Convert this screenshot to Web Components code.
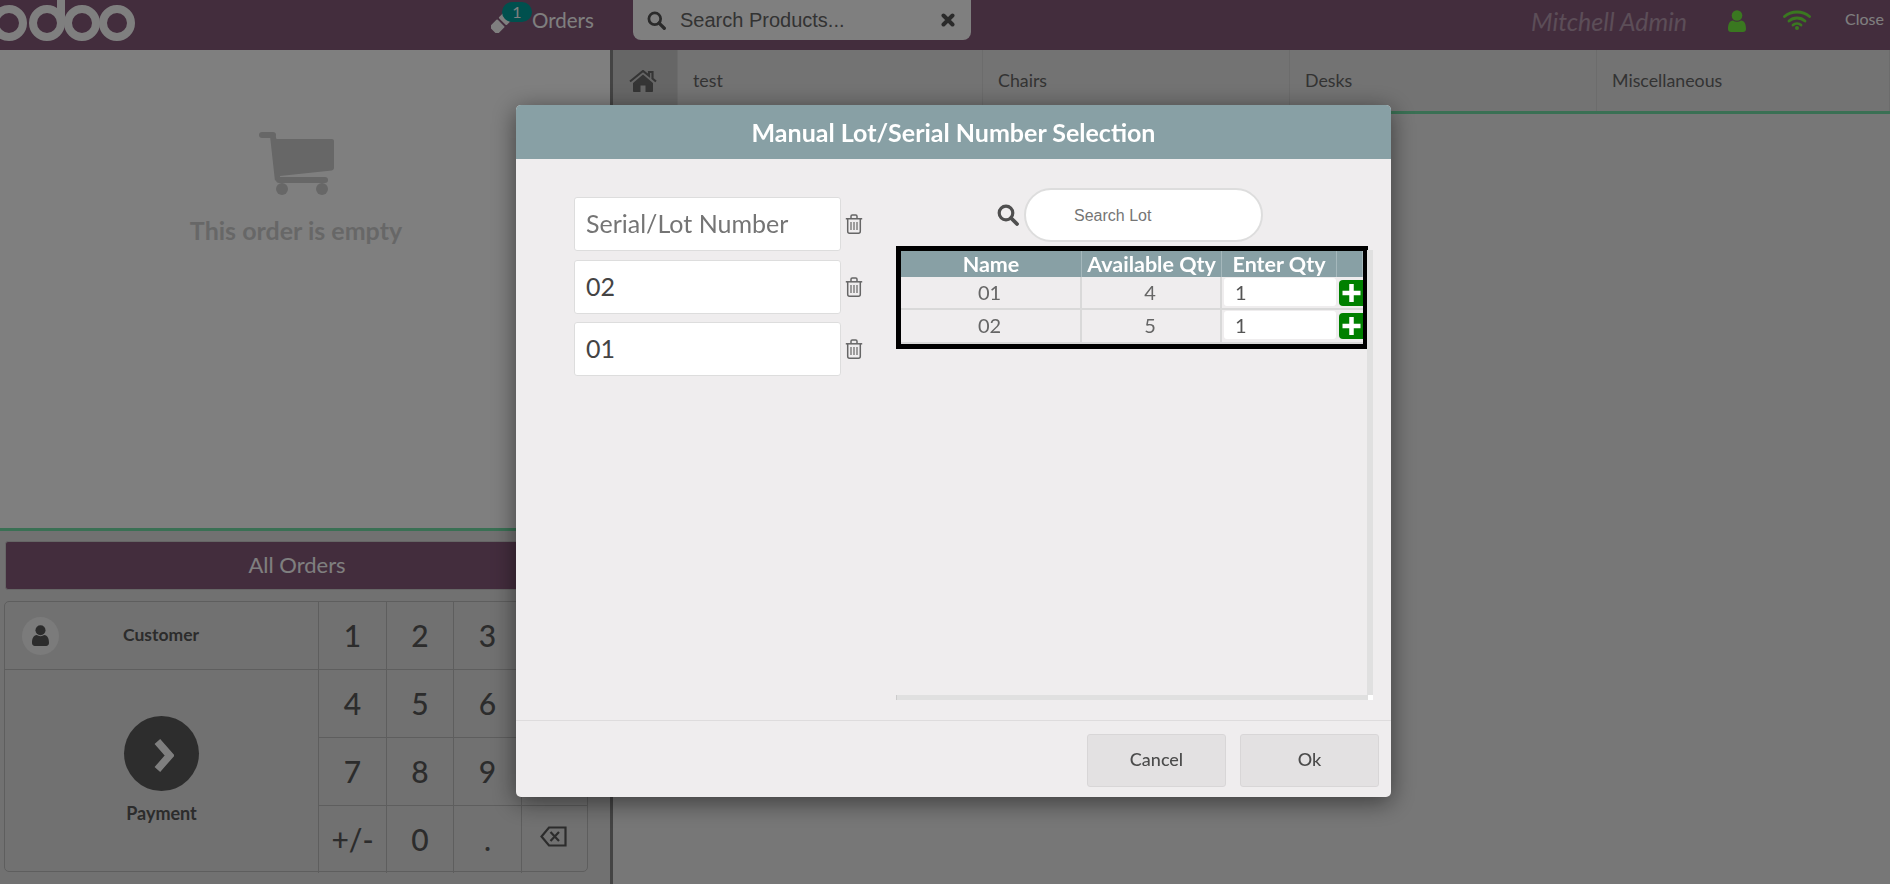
<!DOCTYPE html>
<html>
<head>
<meta charset="utf-8">
<title>POS</title>
<style>
  html, body { margin: 0; height: 884px; overflow: hidden; background: #fff; }
  body { font-family: Lato, "Liberation Sans", sans-serif; }
</style>
</head>
<body>
<pos-app></pos-app>
<lot-dialog></lot-dialog>

<script>
const ICONS = {
  search: `<svg viewBox="0 0 22 22" width="22" height="22"><circle cx="9" cy="9" r="6.8" fill="none" stroke="currentColor" stroke-width="3.2"/><path d="M14 14l6 6" stroke="currentColor" stroke-width="3.8" stroke-linecap="round"/></svg>`,
  times: `<svg viewBox="0 0 14 14" width="14" height="14"><path d="M2.5 2.5l9 9M11.5 2.5l-9 9" stroke="currentColor" stroke-width="4" stroke-linecap="round"/></svg>`,
  user: `<svg viewBox="0 0 18 22" width="18" height="22"><circle cx="9" cy="5.5" r="5.3" fill="currentColor"/><path d="M0 19c0-5 1.500-8 5-8.500 2.300 1.600 5.700 1.600 8 0 3.500.5 5 3.500 5 8.500 0 2-1.200 3-3 3H3c-1.800 0-3-1-3-3z" fill="currentColor"/></svg>`,
  wifi: `<svg viewBox="0 0 28 20" width="28" height="20"><g fill="none" stroke="currentColor" stroke-width="2.800" stroke-linecap="round"><path d="M1.500 6.500c7-6 18-6 25 0"/><path d="M6 11c4.500-4 11.500-4 16 0"/><path d="M10 15c2.300-1.900 5.700-1.900 8 0"/></g><circle cx="14" cy="18" r="2" fill="currentColor"/></svg>`,
  home: `<svg viewBox="0 0 28 22" width="28" height="22"><path d="M14 4.500L4 13v8c0 .6.400 1 1 1h6.500v-6.500h5V22H23c.6 0 1-.4 1-1v-8z" fill="currentColor"/><path d="M1 11.500L14 1l6 4.800V2h3.500v6.600L27 11.500" fill="none" stroke="currentColor" stroke-width="2.200"/></svg>`,
  trash: `<svg viewBox="0 0 18 20" width="18" height="20"><g fill="none" stroke="currentColor" stroke-width="1.500"><path d="M.8 4.800h16.400"/><path d="M6 4.500V2.300C6 1.400 6.600 1 7.300 1h3.400c.7 0 1.300.4 1.300 1.300v2.200"/><path d="M2.700 4.800v12.400c0 1.100.7 2 1.800 2h9c1.100 0 1.800-.9 1.800-2V4.800"/><path d="M6 8v8M9 8v8M12 8v8" stroke-width="1.200"/></g></svg>`,
  plus: `<svg viewBox="0 0 24 26" width="24" height="26"><rect width="30" height="26" rx="4" fill="#008000"/><path d="M12.500 4v18M3.500 13h18" stroke="#fff" stroke-width="4.500"/></svg>`,
  ticket: `<svg viewBox="0 0 20 20" width="20" height="20"><g transform="rotate(45 10 10)" fill="currentColor"><rect x="4.500" y="-1" width="11" height="9" rx="1"/><rect x="4.500" y="10" width="11" height="11" rx="1"/></g></svg>`,
  cart: `<svg viewBox="0 0 75 63" width="75" height="63"><g fill="currentColor"><rect x="0" y="0" width="17" height="6" rx="3"/><path d="M11 2h5l1.500 5H73c1.100 0 2 .9 2 2v27c0 1.200-.8 2.200-2 2.400L21 44l.7 4.500h-5.800L11 4z"/><rect x="17" y="45" width="52" height="6" rx="3"/><circle cx="23" cy="57" r="6"/><circle cx="63" cy="57" r="6"/></g></svg>`,
  chevron: `<svg viewBox="0 0 24 42" width="24" height="42"><path d="M5 5l14 16L5 37" fill="none" stroke="currentColor" stroke-width="8.500"/></svg>`,
  backspace: `<svg viewBox="0 0 27 21" width="27" height="21"><path d="M25.500 1.500H9L1.500 10.500 9 19.500h16.500z" fill="none" stroke="currentColor" stroke-width="2.200"/><path d="M10.500 6l8.500 9M19 6l-8.500 9" stroke="currentColor" stroke-width="2.200"/></svg>`,
  logo: `<svg viewBox="0 0 140 50" width="140" height="50"><g fill="none" stroke="currentColor" stroke-width="8"><circle cx="9" cy="23" r="14"/><circle cx="47" cy="23" r="14"/><path d="M61 23V-4"/><circle cx="82" cy="23" r="14"/><circle cx="117" cy="23" r="14"/></g></svg>`
};

class PosHeader extends HTMLElement {
  constructor() {
    super();
    this.attachShadow({ mode: "open" });
    this.shadowRoot.innerHTML = `
      <style>
        :host { display: flex; height: 50px; background: #875a7b; color: #fff; align-items: flex-start; }
        .logo { width: 491px; height: 50px; color: #fff; }
        .orders { width: 142px; height: 50px; display: flex; align-items: flex-start; position: relative; font-size: 20.500px; line-height: 40px; }
        .orders svg { margin-top: 13px; }
        .orders span { margin-left: 21px; }
        .badge { position: absolute; left: 11px; top: 2px; width: 30px; height: 20px; border-radius: 10px; background: #00a09d; font-size: 16px; line-height: 20px; text-align: center; }
        .search { width: 338px; height: 40px; box-sizing: border-box; background: #fff; border-radius: 0 0 8px 8px; display: flex; align-items: center; padding: 0 16px 0 14px; color: #555; font: 20px "Liberation Sans", sans-serif; }
        .search .txt { flex: 1; margin-left: 14px; color: #666; }
        .search svg:first-child { width: 19px; height: 19px; }
        .user { margin-left: 560px; width: 197px; height: 42px; line-height: 42px; font-size: 25px; font-style: italic; color: #b89cb0; }
        .st { width: 55px; height: 50px; padding-top: 10px; box-sizing: border-box; color: #74f040; }
        .wifi { color: #74f040; width: 62px; }
        .close { font-size: 16px; line-height: 38px; color: #fff; }
      </style>
      <div class="logo">${ICONS.logo}</div>
      <div class="orders">${ICONS.ticket}<span>Orders</span><div class="badge">1</div></div>
      <div class="search">${ICONS.search}<div class="txt">Search Products...</div>${ICONS.times}</div>
      <div class="user">Mitchell Admin</div>
      <div class="st">${ICONS.user}</div>
      <div class="st wifi">${ICONS.wifi}</div>
      <div class="close">Close</div>
    `;
  }
}

class NumPad extends HTMLElement {
  constructor() {
    super();
    this.attachShadow({ mode: "open" });
    const keys = ["1", "2", "3", "", "4", "5", "6", "", "7", "8", "9", "", "+/-", "0", ".", `<span class="bs">${ICONS.backspace}</span>`];
    this.shadowRoot.innerHTML = `
      <style>
        :host { display: grid; grid-template-columns: 313px 68px 67px 68px 67px; grid-template-rows: 67px 68px 68px 68px; margin-left: 4px; width: 584px; height: 271px; box-sizing: border-box; border: 1px solid #bcbcbc; border-radius: 5px; color: #585858; }
        .key { display: flex; align-items: center; justify-content: center; font-size: 30px; font-weight: 500; border-left: 1px solid #bcbcbc; border-top: 1px solid #bcbcbc; box-sizing: border-box; padding-bottom: 1px; }
        .r1 { border-top: 0; }
        .bs { display: block; height: 21px; margin: -5px 4px 0 0; }
        .bs svg { display: block; }
        .customer { display: flex; align-items: center; font-size: 17.500px; font-weight: 700; }
        .avatar { width: 37px; height: 38px; margin-left: 17px; border-radius: 50%; background: #f6f6f6; display: flex; align-items: center; justify-content: center; }
        .avatar svg { width: 17px; height: 21px; }
        .customer span { margin-left: 64px; margin-top: -2px; }
        .pay { grid-row: 2 / 5; border-top: 1px solid #bcbcbc; display: flex; flex-direction: column; align-items: center; font-size: 18px; font-weight: 700; }
        .circle { width: 75px; height: 75px; margin-top: 46px; border-radius: 50%; background: #5a5a5a; color: #fff; display: flex; align-items: center; justify-content: center; }
        .circle svg { width: 21px; height: 37px; margin-left: 4px; margin-top: 4px; }
        .pay span { margin-top: 11px; }
      </style>
      <div class="customer"><div class="avatar">${ICONS.user}</div><span>Customer</span></div>
      ${keys.slice(0, 4).map(k => `<div class="key r1">${k}</div>`).join("")}
      <div class="pay"><div class="circle">${ICONS.chevron}</div><span>Payment</span></div>
      ${keys.slice(4).map(k => `<div class="key">${k}</div>`).join("")}
    `;
  }
}

class OrderPane extends HTMLElement {
  constructor() {
    super();
    this.attachShadow({ mode: "open" });
    this.shadowRoot.innerHTML = `
      <style>
        :host { display: flex; flex-direction: column; width: 610px; height: 834px; background: #fff; }
        .empty { height: 478px; box-sizing: border-box; padding: 82px 18px 0 0; display: flex; flex-direction: column; align-items: center; color: #cfcfcf; }
        .empty span { font-size: 25px; font-weight: 700; margin-top: 20px; }
        .bottom { flex: 1; background: #e2e2e2; border-top: 3px solid #74e0a8; padding-top: 10px; }
        .all { margin: 0 21px 11px 5px; height: 49px; box-sizing: border-box; background: #875a7b; border: 1px solid #ccc; border-radius: 3px; color: #fff; font-size: 22px; line-height: 45px; text-align: center; }
      </style>
      <div class="empty">${ICONS.cart}<span>This order is empty</span></div>
      <div class="bottom">
        <div class="all">All Orders</div>
        <num-pad></num-pad>
      </div>
    `;
  }
}

class CategoryBar extends HTMLElement {
  constructor() {
    super();
    this.attachShadow({ mode: "open" });
    const names = [["test", 305], ["Chairs", 307], ["Desks", 307], ["Miscellaneous", 293]];
    this.shadowRoot.innerHTML = `
      <style>
        :host { display: flex; height: 64px; box-sizing: border-box; background: #e6e6e6; border-bottom: 3px solid #74e0a8; color: #666; font-size: 17.800px; }
        .home { width: 65px; background: #cdcdcd; display: flex; align-items: center; justify-content: center; color: #6a6a6a; border-right: 1px solid #d8d8d8; box-sizing: border-box; padding-right: 4px; }
        .cat { box-sizing: border-box; border-right: 1px solid #d8d8d8; padding: 0 16px 0 15px; line-height: 60px; }
      </style>
      <div class="home">${ICONS.home}</div>
      ${names.map(([n, w]) => `<div class="cat" style="width:${w}px">${n}</div>`).join("")}
    `;
  }
}

class PosApp extends HTMLElement {
  constructor() {
    super();
    this.attachShadow({ mode: "open" });
    this.shadowRoot.innerHTML = `
      <style>
        :host { display: block; width: 1890px; height: 884px; background: #eee; }
        .main { display: flex; height: 834px; }
        .rule { width: 3px; background: #888; }
        .right { flex: 1; background: #eee; }
      </style>
      <pos-header></pos-header>
      <div class="main">
        <order-pane></order-pane>
        <div class="rule"></div>
        <div class="right"><category-bar></category-bar></div>
      </div>
    `;
  }
}

class LotField extends HTMLElement {
  constructor() {
    super();
    this.attachShadow({ mode: "open" });
    this.shadowRoot.innerHTML = `
      <style>
        :host { display: flex; align-items: center; height: 54px; margin-bottom: 8.500px; color: #666; }
        .box { width: 267px; height: 54px; box-sizing: border-box; background: #fff; border: 1px solid #ddd; border-radius: 3px; padding: 0 11px; font-size: 25px; line-height: 51px; color: #444; }
        :host([placeholder]) .box { color: #757575; }
        svg { margin-left: 4px; }
      </style>
      <div class="box"><slot></slot></div>
      ${ICONS.trash}
    `;
  }
}

class LotTable extends HTMLElement {
  constructor() {
    super();
    this.attachShadow({ mode: "open" });
    const rows = [["01", "4"], ["02", "5"]];
    this.shadowRoot.innerHTML = `
      <style>
        :host { display: grid; grid-template-columns: 181px 140px 115px 26px; grid-template-rows: 26px 33px 34px; width: 472px; height: 103px; box-sizing: border-box; border: 5px solid #000; overflow: hidden; font-size: 20px; color: #666; }
        .th { background: #88a0a5; color: #fff; font-size: 21.500px; font-weight: 700; text-align: center; line-height: 27px; border-right: 1px solid #a5b8bc; box-sizing: border-box; white-space: nowrap; }
        .td { text-align: center; line-height: 28px; border-right: 2px solid #d9d9d9; border-bottom: 2px solid #d9d9d9; box-sizing: border-box; padding: 1px 2px 0 0; }
        .qty { padding: 1px 1px 0 2px; border-bottom: 2px solid #d9d9d9; box-sizing: border-box; }
        .qty div { background: #fff; height: 28px; border-radius: 3px; text-align: left; padding-left: 11px; line-height: 28px; color: #555; }
        .add { border-bottom: 2px solid #d9d9d9; box-sizing: border-box; padding: 3px 0 0 2px; overflow: hidden; }
        .add svg { display: block; }
      </style>
      <div class="th">Name</div><div class="th">Available Qty</div><div class="th">Enter Qty</div><div class="th"></div>
      ${rows.map(([n, q]) => `
        <div class="td">${n}</div><div class="td">${q}</div>
        <div class="qty"><div>1</div></div>
        <div class="add">${ICONS.plus}</div>`).join("")}
    `;
  }
}

class LotDialog extends HTMLElement {
  constructor() {
    super();
    this.attachShadow({ mode: "open" });
    this.shadowRoot.innerHTML = `
      <style>
        :host { position: fixed; inset: 0; background: rgba(0, 0, 0, 0.5); display: block; }
        .modal { position: absolute; left: 516px; top: 105px; width: 875px; height: 692px; background: #efedee; border-radius: 5px; box-shadow: 0 5px 25px rgba(0, 0, 0, 0.5); display: flex; flex-direction: column; overflow: hidden; }
        .title { height: 54px; background: #88a0a5; color: #fff; font-size: 25px; font-weight: 700; text-align: center; line-height: 54px; flex: none; }
        .body { flex: 1; display: flex; }
        .left { width: 322px; padding: 38px 0 0 58px; }
        .right { width: 477px; display: flex; flex-direction: column; height: 100%; }
        .find { display: flex; align-items: center; height: 54px; margin-top: 29px; margin-bottom: 4px; padding-left: 101px; color: #4f4f4f; }
        .pill { width: 239px; height: 54px; margin-left: 5px; box-sizing: border-box; background: #fff; border: 2px solid #ddd; border-radius: 27px; padding-left: 48px; font: 16px/51px "Liberation Sans", sans-serif; color: #757575; }
        .scroller { display: grid; grid-template-columns: 472px 5px; grid-template-rows: 449px 5px; }
        .vbar { background: #e0e0e0; margin-top: 4px; margin-left: -1px; }
        .hbar { background: #e0e0e0; border-left: 1px solid #ccc; }
        .corner { background: #fff; }
        .table-wrap { height: 449px; }
        .foot { height: 77px; flex: none; box-sizing: border-box; border-top: 1px solid #dedcdd; display: flex; justify-content: flex-end; gap: 14px; padding: 13px 12px 0 0; }
        .btn { width: 139px; height: 53px; box-sizing: border-box; background: #e3e1e2; border: 1px solid #d8d6d7; border-radius: 3px; font-size: 18px; font-weight: 500; line-height: 49px; text-align: center; color: #4c4c4c; }
      </style>
      <div class="modal">
        <div class="title">Manual Lot/Serial Number Selection</div>
        <div class="body">
          <div class="left">
            <lot-field placeholder>Serial/Lot Number</lot-field>
            <lot-field>02</lot-field>
            <lot-field>01</lot-field>
          </div>
          <div class="right">
            <div class="find">${ICONS.search}<div class="pill">Search Lot</div></div>
            <div class="scroller">
              <div class="table-wrap"><lot-table></lot-table></div>
              <div class="vbar"></div>
              <div class="hbar"></div>
              <div class="corner"></div>
            </div>
          </div>
        </div>
        <div class="foot"><div class="btn">Cancel</div><div class="btn">Ok</div></div>
      </div>
    `;
  }
}

customElements.define("pos-header", PosHeader);
customElements.define("num-pad", NumPad);
customElements.define("order-pane", OrderPane);
customElements.define("category-bar", CategoryBar);
customElements.define("pos-app", PosApp);
customElements.define("lot-field", LotField);
customElements.define("lot-table", LotTable);
customElements.define("lot-dialog", LotDialog);
</script>
</body>
</html>
